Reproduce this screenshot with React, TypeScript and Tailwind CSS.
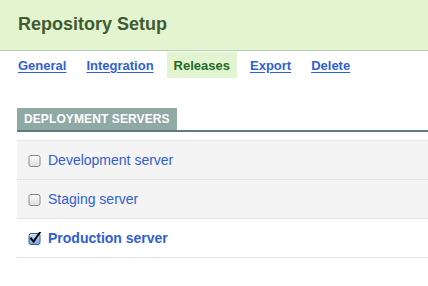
import type { FC } from 'react';

const font = { fontFamily: '"Liberation Sans", Arial, sans-serif' };

const tabs = [
  { title: "General", active: false },
  { title: "Integration", active: false },
  { title: "Releases", active: true },
  { title: "Export", active: false },
  { title: "Delete", active: false },
];

const servers = [
  { name: "Development server", checked: false, shaded: true },
  { name: "Staging server", checked: false, shaded: true },
  { name: "Production server", checked: true, shaded: false },
];

const CheckBox: FC<{ checked: boolean }> = ({ checked }) => (
  <svg width="13" height="13" viewBox="0 0 13 13" className="shrink-0">
    <defs>
      <linearGradient id="cbOff" x1="0" y1="0" x2="0" y2="1">
        <stop offset="0" stopColor="#ffffff" />
        <stop offset="1" stopColor="#dcdcdc" />
      </linearGradient>
      <linearGradient id="cbOn" x1="0" y1="0" x2="0" y2="1">
        <stop offset="0" stopColor="#cfe3fb" />
        <stop offset="1" stopColor="#6ea4ea" />
      </linearGradient>
    </defs>
    <rect x="1" y="1.5" width="11" height="11" rx="2" fill={checked ? "url(#cbOn)" : "url(#cbOff)"} stroke={checked ? "#3d5f8c" : "#8a8a8a"} />
    {checked && (
      <path d="M3 6.5 L5.6 9.6 L11.8 0.6" fill="none" stroke="#000" strokeWidth="2" strokeLinecap="square" />
    )}
  </svg>
);

export default function App() {
  return (
    <div className="w-[428px] h-[286px] bg-white overflow-hidden" style={font}>
      <div className="h-[51px] bg-[#e2f4d0] border-b border-[#b4cfb6] flex items-center pl-[18px] pb-[2px]">
        <h1 className="text-[18px] font-bold text-[#435a30]">Repository Setup</h1>
      </div>

      <nav className="flex gap-[6px] pl-[11px] mt-[1px]">
        {tabs.map((t) => (
          <a
            key={t.title}
            href="#"
            className={
              t.active
                ? "h-[26px] pt-[1px] px-[7px] flex items-center text-[13px] font-bold bg-[#e2f4d0] text-[#1f6a1f]"
                : "h-[26px] pt-[1px] px-[7px] flex items-center text-[13px] font-bold text-[#2f5fd6] underline underline-offset-2"
            }
          >
            {t.title}
          </a>
        ))}
      </nav>

      <div className="pl-[17px] mt-[28px]">
        <div className="border-b-2 border-[#5d7b7a]">
          <div className="inline-flex h-[22px] items-center px-[7px] bg-[#8fa9a4] text-white text-[12px] font-bold tracking-[0.1px]">
            DEPLOYMENT SERVERS
          </div>
        </div>

        <ul className="mt-[8px] border-t border-[#e6e6e6]">
          {servers.map((s) => (
            <li
              key={s.name}
              className={
                s.shaded
                  ? "h-[39px] flex items-center gap-[7px] pl-[11px] bg-[#f4f4f4] border-b border-[#e4e4e4]"
                  : "h-[39px] flex items-center gap-[7px] pl-[11px] bg-white border-b border-[#e4e4e4]"
              }
            >
              <CheckBox checked={s.checked} />
              <span className={s.checked ? "text-[14px] font-bold text-[#3060d4]" : "text-[14px] text-[#3060d4]"}>
                {s.name}
              </span>
            </li>
          ))}
        </ul>
      </div>
    </div>
  );
}
